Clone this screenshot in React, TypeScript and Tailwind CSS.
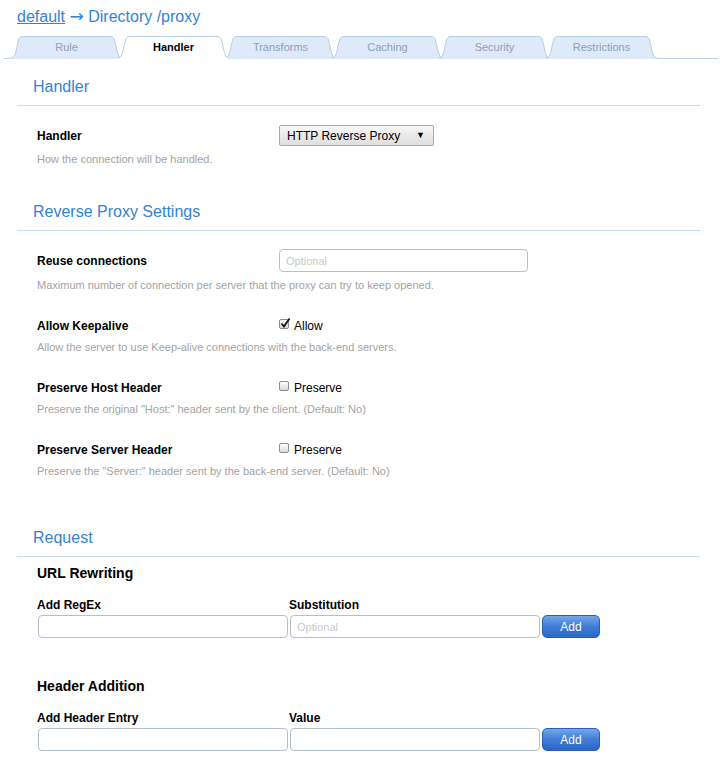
import React from "react";

const tabs = ["Rule", "Handler", "Transforms", "Caching", "Security", "Restrictions"];

const Tab = ({ label, active }: { label: string; active: boolean }) => {
  const stroke =
    "M0.5,22 C4,22 5,19 6,15 L8.5,4 C9,2 10.5,0.5 13,0.5 L100,0.5 C102.5,0.5 104,2 104.5,4 L107,15 C108,19 109,22 112.5,22";
  return (
    <div
      className={`relative -ml-[6px] first:ml-0 flex h-[22px] w-[113px] items-center justify-center ${
        active ? "z-10" : ""
      }`}
    >
      <svg className="absolute left-0 top-0" width="113" height="23" viewBox="0 0 113 23">
        <path d={stroke + " L112.5,23 L0.5,23 Z"} fill={active ? "#ffffff" : "#deeafa"} />
        <path d={stroke} fill="none" stroke="#b7cce6" strokeWidth="1" />
      </svg>
      <span
        className={`relative text-[11px] ${
          active ? "font-bold text-black" : "text-[#8da1b9]"
        }`}
      >
        {label}
      </span>
    </div>
  );
};

const Heading = ({ children, pt }: { children: React.ReactNode; pt: string }) => (
  <div
    className={`${pt} pb-[9px] pl-[16px] text-[16px] leading-[18px] text-[#3283d5] border-b border-[#c9dcee]`}
  >
    {children}
  </div>
);

const Label = ({ children }: { children: React.ReactNode }) => (
  <div className="w-[242px] text-[12px] font-bold text-black">{children}</div>
);

const Desc = ({ children, mt }: { children: React.ReactNode; mt: string }) => (
  <div className={`${mt} pl-[20px] text-[11px] leading-[13px] text-[#a3a3a3]`}>{children}</div>
);

const Checkbox = ({ checked }: { checked?: boolean }) => (
  <span className="relative -mt-[3px] mr-[5px] inline-block h-[10px] w-[10px] rounded-[2px] border border-[#8e8e8e] bg-gradient-to-b from-white to-[#d9d9d9]">
    {checked && (
      <svg className="absolute -left-[1px] -top-[3px]" width="12" height="12" viewBox="0 0 12 12">
        <path d="M2.5,6.5 L5,9.5 L10.5,1.5" fill="none" stroke="#111" strokeWidth="1.8" />
      </svg>
    )}
  </span>
);

const TextInput = ({ w, placeholder }: { w: string; placeholder?: string }) => (
  <input
    className={`${w} h-[23px] rounded-[4px] border border-[#b4bfcc] bg-white px-[6px] text-[11px] outline-none placeholder:text-[#c9c9c9]`}
    placeholder={placeholder}
  />
);

const AddButton = () => (
  <button className="h-[23px] w-[58px] rounded-[5px] border border-[#2a5fb3] bg-gradient-to-b from-[#74a8ea] via-[#3f7cd7] to-[#2b67c6] text-[12px] text-white">
    Add
  </button>
);

export default function App() {
  return (
    <div className="w-[720px] min-h-[784px] bg-white font-['Liberation_Sans',Arial,sans-serif]">
      <div className="h-[27px] pl-[17px] pt-[7px] text-[16px] leading-[20px] text-[#3283d5]">
        <a href="#" className="underline">
          default
        </a>{" "}
        <span className="font-['DejaVu_Sans',sans-serif] text-[17px] leading-none">→</span> Directory /proxy
      </div>

      <div className="ml-[4px] mt-[9px] flex w-[714px] border-b border-[#bcd0e6] pl-[6px]">
        {tabs.map((t) => (
          <Tab key={t} label={t} active={t === "Handler"} />
        ))}
      </div>

      <div className="ml-[17px] w-[683px]">
        <Heading pt="pt-[19px]">Handler</Heading>

        <div className="mt-[19px] flex h-[21px] items-center pl-[20px]">
          <Label>Handler</Label>
          <div className="flex h-[21px] w-[155px] items-center justify-between rounded-[2px] border border-[#a9a9a9] bg-gradient-to-b from-[#f7f7f7] to-[#dedede] pl-[7px] pr-[8px] text-[12px] text-black">
            <span>HTTP Reverse Proxy</span>
            <span className="text-[9px]">▼</span>
          </div>
        </div>
        <Desc mt="mt-[7px]">How the connection will be handled.</Desc>

        <Heading pt="pt-[37px]">Reverse Proxy Settings</Heading>

        <div className="mt-[18px] flex h-[23px] items-center pl-[20px]">
          <Label>Reuse connections</Label>
          <TextInput w="w-[249px]" placeholder="Optional" />
        </div>
        <Desc mt="mt-[7px]">
          Maximum number of connection per server that the proxy can try to keep opened.
        </Desc>

        <div className="mt-[22px] flex h-[23px] items-center pl-[20px]">
          <Label>Allow Keepalive</Label>
          <label className="flex items-center text-[12px] text-black">
            <Checkbox checked />
            Allow
          </label>
        </div>
        <Desc mt="mt-[4px]">Allow the server to use Keep-alive connections with the back-end servers.</Desc>

        <div className="mt-[22px] flex h-[23px] items-center pl-[20px]">
          <Label>Preserve Host Header</Label>
          <label className="flex items-center text-[12px] text-black">
            <Checkbox />
            Preserve
          </label>
        </div>
        <Desc mt="mt-[4px]">Preserve the original "Host:" header sent by the client. (Default: No)</Desc>

        <div className="mt-[22px] flex h-[23px] items-center pl-[20px]">
          <Label>Preserve Server Header</Label>
          <label className="flex items-center text-[12px] text-black">
            <Checkbox />
            Preserve
          </label>
        </div>
        <Desc mt="mt-[4px]">Preserve the "Server:" header sent by the back-end server. (Default: No)</Desc>

        <Heading pt="pt-[51px]">Request</Heading>

        <div className="pl-[20px]">
          <div className="mt-[8px] text-[14px] font-bold leading-[17px] text-black">URL Rewriting</div>
          <div className="mt-[16px] flex text-[12px] font-bold leading-[14px] text-black">
            <div className="w-[252px]">Add RegEx</div>
            <div>Substitution</div>
          </div>
          <div className="mt-[3px] flex gap-[2px] pl-[1px]">
            <TextInput w="w-[250px]" />
            <TextInput w="w-[250px]" placeholder="Optional" />
            <AddButton />
          </div>

          <div className="mt-[40px] text-[14px] font-bold leading-[17px] text-black">Header Addition</div>
          <div className="mt-[16px] flex text-[12px] font-bold leading-[14px] text-black">
            <div className="w-[252px]">Add Header Entry</div>
            <div>Value</div>
          </div>
          <div className="mt-[3px] flex gap-[2px] pl-[1px]">
            <TextInput w="w-[250px]" />
            <TextInput w="w-[250px]" />
            <AddButton />
          </div>
        </div>
      </div>
    </div>
  );
}
